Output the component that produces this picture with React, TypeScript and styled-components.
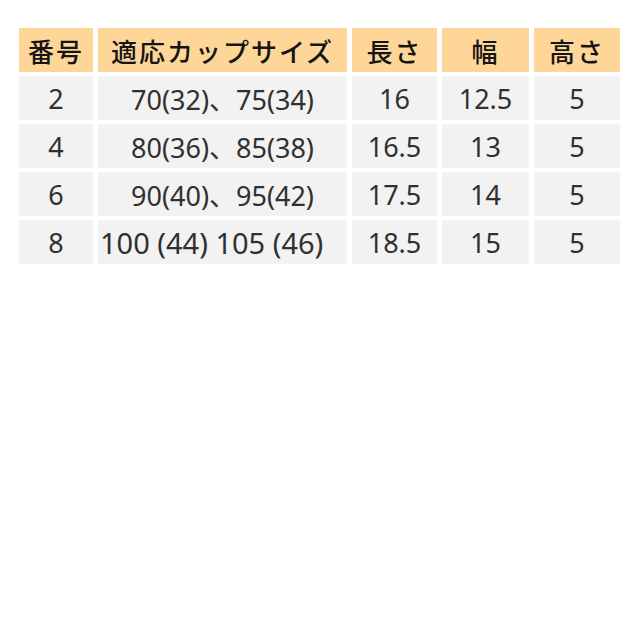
import React from 'react'
import styled, { createGlobalStyle } from 'styled-components'

const GlobalStyle = createGlobalStyle`
    html, body {
        margin: 0;
        padding: 0;
        background: #ffffff;
    }
    body {
        width: 640px;
        height: 640px;
    }
`

const Page = styled.div`
    padding: 28px 0 0 19px;
`

const SizeTable = styled.div`
    display: grid;
    grid-template-columns: 74px 249px 85px 87px 86px;
    grid-auto-rows: 44px;
    column-gap: 5px;
    row-gap: 4px;
`

const HeadCell = styled.div`
    display: flex;
    align-items: center;
    justify-content: center;
    background: #fdd698;
    color: #151515;
    font-family: 'Noto Sans CJK JP', 'Noto Sans', sans-serif;
    font-weight: 500;
    font-size: 26px;
    letter-spacing: 2px;
    white-space: nowrap;
`

// the last size row is set a touch larger and sits to the left in the source
const Cell = styled.div<{ $wide?: boolean }>`
    display: flex;
    align-items: center;
    justify-content: ${(p) => (p.$wide ? 'flex-start' : 'center')};
    padding-left: ${(p) => (p.$wide ? '2px' : '0')};
    background: #f2f2f2;
    color: #303030;
    font-family: 'Noto Sans', 'Noto Sans CJK JP', sans-serif;
    font-size: ${(p) => (p.$wide ? '29px' : '27px')};
    white-space: nowrap;
`

const headers = ['番号', '適応カップサイズ', '長さ', '幅', '高さ']

const rows = [
    ['2', '70(32)、75(34)', '16', '12.5', '5'],
    ['4', '80(36)、85(38)', '16.5', '13', '5'],
    ['6', '90(40)、95(42)', '17.5', '14', '5'],
    ['8', '100 (44) 105 (46)', '18.5', '15', '5'],
]

export default function App() {
    return (
        <>
            <GlobalStyle />
            <Page>
                <SizeTable>
                    {headers.map((h) => (
                        <HeadCell key={h}>{h}</HeadCell>
                    ))}
                    {rows.map((row, i) =>
                        row.map((value, j) => (
                            <Cell key={`${i}-${j}`} $wide={value.includes(' ')}>
                                {value}
                            </Cell>
                        ))
                    )}
                </SizeTable>
            </Page>
        </>
    )
}
